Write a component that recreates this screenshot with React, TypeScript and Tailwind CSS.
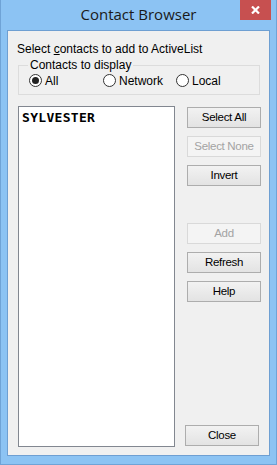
import React, { useState } from 'react';

type Source = 'all' | 'network' | 'local';

const DlgButton: React.FC<{ label: string; disabled?: boolean; className?: string }> = ({ label, disabled, className }) => (
  <button
    disabled={disabled}
    className={
      'h-[21px] w-[74px] text-[11.5px] tracking-[-0.3px] leading-none border ' +
      (disabled
        ? 'border-[#d9d9d9] bg-[#f4f4f4] text-[#a3a3a3] '
        : 'border-[#adadad] bg-gradient-to-b from-[#f2f2f2] to-[#e3e3e3] text-black ') +
      (className ?? '')
    }
  >
    {label}
  </button>
);

const Radio: React.FC<{ checked: boolean; label: string; onClick: () => void; className?: string }> = ({ checked, label, onClick, className }) => (
  <label onClick={onClick} className={'flex items-center gap-[3px] cursor-default ' + (className ?? '')}>
    <span className="w-[13px] h-[13px] rounded-full border border-[#333333] bg-white flex items-center justify-center">
      {checked && <span className="w-[7px] h-[7px] rounded-full bg-[#222222]" />}
    </span>
    <span className="text-[12px] leading-none">{label}</span>
  </label>
);

export default function App() {
  const [source, setSource] = useState<Source>('all');

  return (
    <div
      className="w-[277px] h-[465px] bg-[#8cc3f3] border border-t-0 border-[#6fa3d6] flex flex-col text-black overflow-hidden"
      style={{ fontFamily: '"Liberation Sans", Arial, sans-serif' }}
    >
      {/* Title bar */}
      <div className="relative h-[30px] shrink-0 flex items-center justify-center">
        <span className="text-[15px] text-[#1a1a1a] mt-[-1px]" style={{ fontFamily: '"Open Sans", "Noto Sans", sans-serif' }}>
          Contact Browser
        </span>
        <div className="absolute top-0 right-[5px] w-[31px] h-[20px] bg-[#c75050] flex items-center justify-center">
          <svg width="9" height="8" viewBox="0 0 9 8">
            <path d="M1 0.5 L8 7.5 M8 0.5 L1 7.5" stroke="white" strokeWidth="2.2" />
          </svg>
        </div>
      </div>

      {/* Client area */}
      <div className="mx-[6px] h-[426px] border border-[#6e9fd2] bg-[#f0f0f0] flex flex-col">
        <div className="pl-[9px] pt-[11px] text-[12px] leading-[14px]">
          Select <span className="underline">c</span>ontacts to add to ActiveList
        </div>

        {/* Group box */}
        <div className="relative ml-[10px] mt-[9px] w-[242px] h-[30px] border border-[#dcdcdc]">
          <span className="absolute left-[9px] top-[-8px] bg-[#f0f0f0] px-[2px] text-[12px] leading-[14px]">
            Contacts to display
          </span>
          <div className="flex items-center pt-[8px] pl-[10px]">
            <Radio checked={source === 'all'} label="All" onClick={() => setSource('all')} className="w-[74px]" />
            <Radio checked={source === 'network'} label="Network" onClick={() => setSource('network')} className="w-[73px]" />
            <Radio checked={source === 'local'} label="Local" onClick={() => setSource('local')} />
          </div>
        </div>

        {/* List + buttons */}
        <div className="flex mt-[11px]">
          <div className="ml-[10px] w-[157px] h-[341px] border border-[#828790] bg-white px-[3px] pt-[3px]">
            <div
              className="text-[13px] font-bold leading-[15px] tracking-[0.3px]"
              style={{ fontFamily: '"DejaVu Sans Mono", "Liberation Mono", monospace' }}
            >
              SYLVESTER
            </div>
          </div>
          <div className="ml-[12px] pt-[1px] flex flex-col">
            <DlgButton label="Select All" />
            <DlgButton label="Select None" disabled className="mt-[8px]" />
            <DlgButton label="Invert" className="mt-[8px]" />
            <DlgButton label="Add" disabled className="mt-[37px]" />
            <DlgButton label="Refresh" className="mt-[8px]" />
            <DlgButton label="Help" className="mt-[8px]" />
            <DlgButton label="Close" className="mt-auto mb-[1px] ml-[-2px]" />
          </div>
        </div>
      </div>
    </div>
  );
}
